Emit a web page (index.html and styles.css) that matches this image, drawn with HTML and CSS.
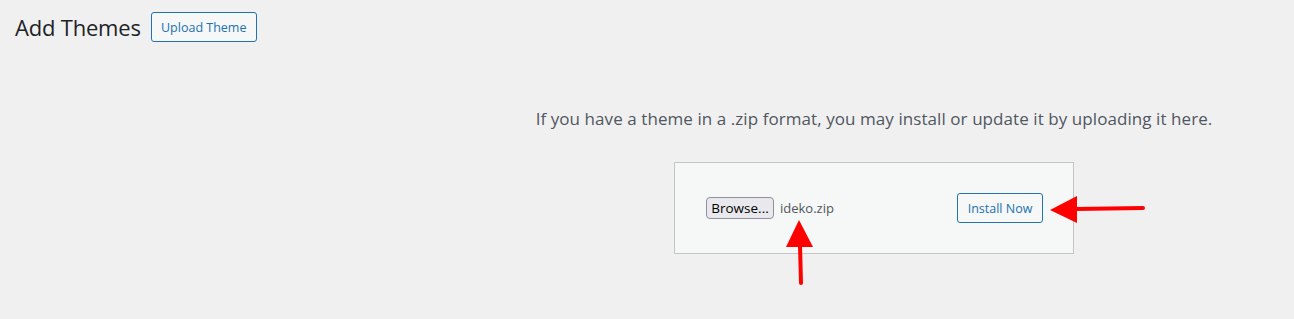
FILE: index.html
```html
<!DOCTYPE html>
<html lang="en">

<head>
    <meta charset="UTF-8">
    <meta name="viewport" content="width=device-width, initial-scale=1.0">
    <title>Add Themes</title>
    <link rel="stylesheet" href="styles.css">
</head>

<body>
    <div class="wrap">
        <div class="page-header">
            <h1>Add Themes</h1>
            <a class="btn-outline upload-toggle">Upload Theme</a>
        </div>

        <div class="upload-theme">
            <p class="install-help">If you have a theme in a .zip format, you may install or update it by uploading it here.</p>
            <form class="upload-form">
                <div class="file-field">
                    <span class="browse-btn">Browse...</span>
                    <span class="file-name">ideko.zip</span>
                </div>
                <button type="button" class="btn-outline">Install Now</button>
            </form>
        </div>
    </div>

    <!-- annotation arrows drawn over the page -->
    <svg class="arrows" width="1294" height="319" viewBox="0 0 1294 319">
        <polygon points="799,220 786,247 813,247" fill="#ff0000" />
        <line x1="800" y1="245" x2="801" y2="283" stroke="#ff0000" stroke-width="4" stroke-linecap="round" />
        <polygon points="1050,210 1077,196 1077,223" fill="#ff0000" />
        <line x1="1075" y1="209" x2="1143" y2="208" stroke="#ff0000" stroke-width="4" stroke-linecap="round" />
    </svg>
</body>

</html>
```

FILE: styles.css
```css
body * {
    box-sizing: border-box;
}

body {
    margin: 0;
    padding: 0;
    background: #f0f0f1;
    color: #3c434a;
    font-family: "Open Sans", "Noto Sans", sans-serif;
    min-height: 319px;
    position: relative;
}

.wrap {
    padding: 12px 0 0 15px;
}

.page-header {
    display: flex;
    align-items: center;
    gap: 10px;
}

.page-header h1 {
    margin: 0;
    font-size: 22px;
    font-weight: 400;
    color: #1d2327;
    line-height: 30px;
    letter-spacing: -0.2px;
}

.btn-outline {
    display: inline-flex;
    align-items: center;
    justify-content: center;
    height: 30px;
    padding: 0 10px;
    border: 1px solid #2271b1;
    border-radius: 3px;
    background: #f6f7f7;
    color: #2271b1;
    font-family: inherit;
    font-size: 12.5px;
    white-space: nowrap;
    cursor: pointer;
}

.upload-toggle {
    width: 106px;
    padding: 0;
}

.upload-theme {
    margin-left: 439px;
    display: flex;
    flex-direction: column;
    align-items: center;
}

.install-help {
    margin: 0;
    padding-top: 63px;
    font-size: 17px;
    line-height: 27px;
    color: #50575e;
    letter-spacing: 0.07px;
    white-space: nowrap;
}

.upload-form {
    margin: 30px 0 0;
    width: 400px;
    padding: 30px;
    background: #f6f7f7;
    border: 1px solid #c3c4c7;
    display: flex;
    justify-content: space-between;
    align-items: center;
}

.upload-form .btn-outline {
    width: 86px;
    padding: 0;
}

.file-field {
    display: flex;
    align-items: center;
    gap: 6px;
    padding-left: 1px;
}

.browse-btn {
    display: inline-flex;
    align-items: center;
    justify-content: center;
    width: 68px;
    height: 22px;
    border: 1px solid #8f8f9d;
    border-radius: 4px;
    background: #e9e9ed;
    color: #000;
    font-size: 13.5px;
}

.file-name {
    font-size: 13px;
    color: #50575e;
}

.arrows {
    position: absolute;
    left: 0;
    top: 0;
    pointer-events: none;
}
```
